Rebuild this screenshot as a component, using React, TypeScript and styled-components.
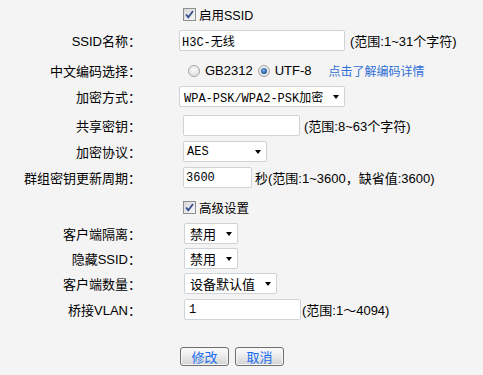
import React from 'react';
import styled, {createGlobalStyle} from 'styled-components';

const GlobalStyle = createGlobalStyle`
  html, body {
    margin: 0;
    background: #f4f4f4;
  }
  body {
    font-family: "Liberation Sans", "Noto Sans CJK SC", sans-serif;
    font-size: 13px;
    color: #000;
  }
`;

const Form = styled.div`
  width: 483px;
  height: 375px;
  padding-top: 4px;
  box-sizing: border-box;
`;

const Row = styled.div<{$mt?: number; $h?: number}>`
  display: grid;
  grid-template-columns: 141px 1fr;
  column-gap: 38px;
  align-items: center;
  height: ${p => p.$h ?? 21}px;
  margin-top: ${p => p.$mt ?? 0}px;
`;

const Label = styled.div`
  text-align: right;
  white-space: nowrap;
  font-size: 13px;
`;

const Field = styled.div<{$indent?: number; $gap?: number}>`
  display: flex;
  align-items: center;
  padding-left: ${p => p.$indent ?? 0}px;
  gap: ${p => p.$gap ?? 0}px;
  white-space: nowrap;
`;

const Input = styled.input<{$w: number; $pad?: number}>`
  box-sizing: border-box;
  width: ${p => p.$w}px;
  height: 21px;
  margin: 0;
  padding: 0 0 0 ${p => p.$pad ?? 3}px;
  border: 1px solid #cfd3d8;
  border-radius: 2px;
  background: #fff;
  font-family: "Liberation Mono", "Noto Sans CJK SC", monospace;
  font-size: 12px;
  color: #000;
  outline: none;
`;

const Select = styled.div<{$w: number; $pad?: number}>`
  box-sizing: border-box;
  width: ${p => p.$w}px;
  height: 21px;
  display: flex;
  align-items: center;
  justify-content: space-between;
  padding: 0 5px 0 ${p => p.$pad ?? 4}px;
  border: 1px solid #cfd3d8;
  border-radius: 2px;
  background: #fff;
  font-family: "Liberation Mono", "Noto Sans CJK SC", monospace;
  font-size: 12px;
`;

const CjkValue = styled.span`
  font-family: "Noto Sans CJK SC", sans-serif;
  font-size: 13px;
`;

const Arrow = styled.span`
  width: 0;
  height: 0;
  border-left: 3.5px solid transparent;
  border-right: 3.5px solid transparent;
  border-top: 4px solid #000;
`;

const Note = styled.span<{$ml?: number}>`
  margin-left: ${p => p.$ml ?? 4}px;
  font-size: 13px;
`;

const CheckText = styled.span`
  margin-left: 3px;
  font-size: 12.5px;
`;

const RadioDot = styled.span<{$checked?: boolean}>`
  box-sizing: border-box;
  width: 12px;
  height: 12px;
  border-radius: 50%;
  border: 1px solid #a4a4a4;
  background: radial-gradient(circle at 50% 35%, #f8f8f8 0%, #dcdcdc 100%);
  display: inline-flex;
  align-items: center;
  justify-content: center;
  &::after {
    content: '';
    display: ${p => (p.$checked ? 'block' : 'none')};
    width: 6px;
    height: 6px;
    border-radius: 50%;
    background: radial-gradient(circle at 45% 40%, #7fb6ea 0%, #2a62a8 55%, #173a73 100%);
  }
`;

const RadioText = styled.span<{$mr?: number}>`
  margin: 0 ${p => p.$mr ?? 5}px 0 5px;
  font-size: 13px;
`;

const Link = styled.a`
  margin-left: 12px;
  color: #2f6fd6;
  font-size: 12px;
  text-decoration: none;
`;

const Button = styled.button`
  box-sizing: border-box;
  width: 49px;
  height: 19px;
  padding: 0;
  margin: 0;
  border: 1px solid #6f6f6f;
  border-radius: 3px;
  background: linear-gradient(#fbfbfb 0%, #ebebeb 50%, #d2d2d2 100%);
  box-shadow: inset 0 0 0 1px #f7f7f7;
  color: #1a6df2;
  font-family: "Noto Sans CJK SC", sans-serif;
  font-size: 13px;
  line-height: 17px;
`;

const CheckBox = () => (
  <svg width="13" height="13" viewBox="0 0 13 13">
    <defs>
      <linearGradient id="cbg" x1="0" y1="0" x2="1" y2="1">
        <stop offset="0" stopColor="#d8d8d8" />
        <stop offset="1" stopColor="#f6f6f6" />
      </linearGradient>
    </defs>
    <rect x="0.5" y="0.5" width="12" height="12" fill="url(#cbg)" stroke="#8e8f8f" />
    <path d="M3 6.5 L5.3 9.2 L10 3" fill="none" stroke="#3a4e92" strokeWidth="1.8" />
  </svg>
);

export default function App() {
  return (
    <>
      <GlobalStyle />
      <Form>
        <Row>
          <span />
          <Field $indent={4}>
            <CheckBox />
            <CheckText>启用SSID</CheckText>
          </Field>
        </Row>
        <Row $mt={5}>
          <Label>SSID名称：</Label>
          <Field>
            <Input $w={166} $pad={2} readOnly defaultValue="H3C-无线" />
            <Note $ml={5}>(范围:1~31个字符)</Note>
          </Field>
        </Row>
        <Row $mt={9}>
          <Label>中文编码选择：</Label>
          <Field $indent={9}>
            <RadioDot />
            <RadioText>GB2312</RadioText>
            <RadioDot $checked />
            <RadioText>UTF-8</RadioText>
            <Link href="#">点击了解编码详情</Link>
          </Field>
        </Row>
        <Row $mt={5}>
          <Label>加密方式：</Label>
          <Field>
            <Select $w={166}>
              <span>WPA-PSK/WPA2-PSK加密</span>
              <Arrow />
            </Select>
          </Field>
        </Row>
        <Row $mt={8}>
          <Label>共享密钥：</Label>
          <Field $indent={4}>
            <Input $w={117} readOnly defaultValue="" />
            <Note>(范围:8~63个字符)</Note>
          </Field>
        </Row>
        <Row $mt={5}>
          <Label>加密协议：</Label>
          <Field $indent={4}>
            <Select $w={84} $pad={3}>
              <span>AES</span>
              <Arrow />
            </Select>
          </Field>
        </Row>
        <Row $mt={5}>
          <Label>群组密钥更新周期：</Label>
          <Field $indent={4}>
            <Input $w={69} $pad={2} readOnly defaultValue="3600" />
            <Note $ml={3}>秒(范围:1~3600，缺省值:3600)</Note>
          </Field>
        </Row>
        <Row $mt={9}>
          <span />
          <Field $indent={4}>
            <CheckBox />
            <CheckText>高级设置</CheckText>
          </Field>
        </Row>
        <Row $mt={5}>
          <Label>客户端隔离：</Label>
          <Field $indent={5}>
            <Select $w={54} $pad={5}>
              <CjkValue>禁用</CjkValue>
              <Arrow />
            </Select>
          </Field>
        </Row>
        <Row $mt={4}>
          <Label>隐藏SSID：</Label>
          <Field $indent={5}>
            <Select $w={54} $pad={5}>
              <CjkValue>禁用</CjkValue>
              <Arrow />
            </Select>
          </Field>
        </Row>
        <Row $mt={4}>
          <Label>客户端数量：</Label>
          <Field $indent={5}>
            <Select $w={93} $pad={5}>
              <CjkValue>设备默认值</CjkValue>
              <Arrow />
            </Select>
          </Field>
        </Row>
        <Row $mt={5}>
          <Label>桥接VLAN：</Label>
          <Field $indent={5}>
            <Input $w={117} $pad={4} readOnly defaultValue="1" />
            <Note $ml={1}>(范围:1～4094)</Note>
          </Field>
        </Row>
        <Row $mt={27} $h={19}>
          <span />
          <Field $indent={1} $gap={6}>
            <Button>修改</Button>
            <Button>取消</Button>
          </Field>
        </Row>
      </Form>
    </>
  );
}
